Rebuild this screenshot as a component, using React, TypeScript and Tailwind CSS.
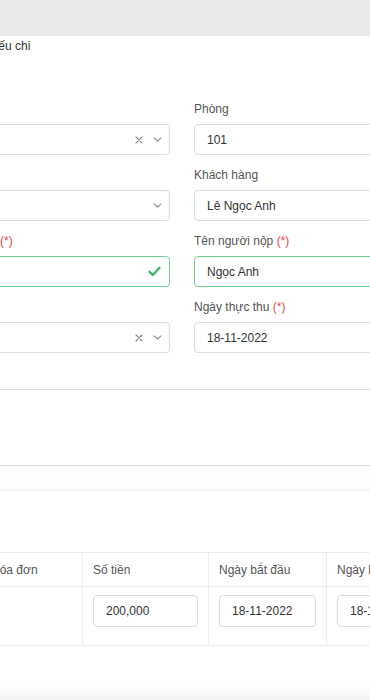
import React from "react";

const XIcon = () => (
  <svg width="8" height="8" viewBox="0 0 8 8" className="shrink-0">
    <path d="M1 1 L7 7 M7 1 L1 7" stroke="#8a8a8a" strokeWidth="1.1" fill="none" strokeLinecap="round" />
  </svg>
);

const Chevron = () => (
  <svg width="9" height="5" viewBox="0 0 9 5" className="shrink-0">
    <path d="M1 0.8 L4.5 4.2 L8 0.8" stroke="#8a8a8a" strokeWidth="1.1" fill="none" strokeLinecap="round" strokeLinejoin="round" />
  </svg>
);

const CheckIcon = () => (
  <svg width="13" height="11" viewBox="0 0 13 11" className="shrink-0">
    <path d="M1.5 5.8 L4.8 9 L11.5 1.8" stroke="#3cb86a" strokeWidth="2.4" fill="none" strokeLinecap="round" strokeLinejoin="round" />
  </svg>
);

const Req = () => <span className="text-[#e5484d]">(*)</span>;

function Label({ children }: { children: React.ReactNode }) {
  return <div className="h-[18px] leading-[18px] text-[12px] text-[#555] whitespace-nowrap mb-[6px]">{children}</div>;
}

function Box({ children, green }: { children?: React.ReactNode; green?: boolean }) {
  return (
    <div
      className={`h-[31px] rounded-[4px] border bg-white flex items-center px-[12px] text-[12px] text-[#333] ${
        green ? "border-[#6fd493]" : "border-[#dcdcdc]"
      }`}
    >
      {children}
    </div>
  );
}

function Field({ label, children, green }: { label: React.ReactNode; children?: React.ReactNode; green?: boolean }) {
  return (
    <div className="mb-[11px]">
      <Label>{label}</Label>
      <Box green={green}>{children}</Box>
    </div>
  );
}

function Cell({ w, children, last }: { w: string; children?: React.ReactNode; last?: boolean }) {
  return <div className={`${w} shrink-0 ${last ? "" : "border-r border-[#ebebf0]"}`}>{children}</div>;
}

export default function App() {
  return (
    <div className="w-[370px] h-[700px] overflow-hidden bg-white relative font-['Liberation_Sans',Arial,sans-serif]">
      <div className="h-[36px] bg-[#e9e9e9]" />
      <div className="h-[20px] leading-[20px] text-[12px] text-[#333] whitespace-nowrap -ml-[19px]">Phiếu chi</div>

      <div className="mt-[44px] -ml-[60px] grid grid-cols-[230px_230px] gap-x-[24px]">
        <div>
          <Field label="Tòa nhà">
            <div className="flex-1" />
            <div className="flex items-center gap-[10px] -mr-[5px]">
              <XIcon />
              <Chevron />
            </div>
          </Field>
          <Field label="Hợp đồng">
            <div className="flex-1" />
            <div className="-mr-[5px]">
              <Chevron />
            </div>
          </Field>
          <Field
            green
            label={
              <>
                <span className="inline-block w-[60px] overflow-hidden align-top">Hình thức</span>
                <Req />
              </>
            }
          >
            <div className="flex-1" />
            <div className="-mr-[4px]">
              <CheckIcon />
            </div>
          </Field>
          <Field label="Loại thu">
            <div className="flex-1" />
            <div className="flex items-center gap-[10px] -mr-[5px]">
              <XIcon />
              <Chevron />
            </div>
          </Field>
        </div>
        <div>
          <Field label="Phòng">101</Field>
          <Field label="Khách hàng">Lê Ngọc Anh</Field>
          <Field
            green
            label={
              <>
                Tên người nộp <Req />
              </>
            }
          >
            Ngọc Anh
          </Field>
          <Field
            label={
              <>
                Ngày thực thu <Req />
              </>
            }
          >
            18-11-2022
          </Field>
        </div>
      </div>

      <div className="mt-[25px] h-px bg-[#dcdcdc]" />
      <div className="h-[75px]" />
      <div className="h-px bg-[#d9d9d9]" />
      <div className="h-[23px] bg-[#fdfdfd]" />
      <div className="h-[2px] bg-[#f3f3f8]" />
      <div className="h-[61px]" />

      <div className="-ml-[19px] border-t border-b border-[#ebebf0] w-[520px]">
        <div className="flex h-[34px] items-center text-[12px] text-[#555] border-b border-[#ebebf0]">
          <Cell w="w-[102px] h-full flex items-center px-[10px]">Hóa đơn</Cell>
          <Cell w="w-[126px] h-full flex items-center px-[10px]">Số tiền</Cell>
          <Cell w="w-[118px] h-full flex items-center px-[10px]">Ngày bắt đầu</Cell>
          <Cell w="w-[150px] h-full flex items-center px-[10px]" last>
            Ngày kết thúc
          </Cell>
        </div>
        <div className="flex h-[58px] text-[12px] text-[#333]">
          <Cell w="w-[102px] h-full" />
          <Cell w="w-[126px] h-full px-[10px] pt-[8px]">
            <div className="h-[32px] rounded-[4px] border border-[#dcdcdc] flex items-center px-[12px]">200,000</div>
          </Cell>
          <Cell w="w-[118px] h-full px-[10px] pt-[8px]">
            <div className="h-[32px] rounded-[4px] border border-[#dcdcdc] flex items-center px-[12px]">18-11-2022</div>
          </Cell>
          <Cell w="w-[150px] h-full px-[10px] pt-[8px]" last>
            <div className="h-[32px] rounded-[4px] border border-[#dcdcdc] flex items-center px-[12px]">18-11-2022</div>
          </Cell>
        </div>
      </div>

      <div className="absolute left-0 right-0 bottom-0 h-[14px] bg-gradient-to-b from-white to-[#f3f3f3]" />
    </div>
  );
}
